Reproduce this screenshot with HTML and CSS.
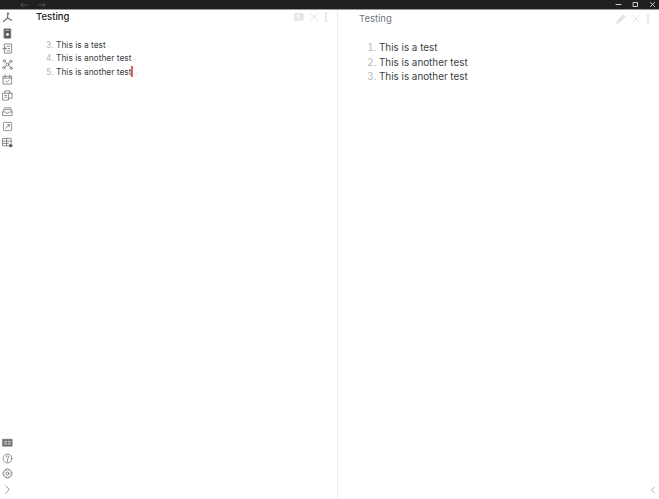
FILE: index.html
```html
<!DOCTYPE html>
<html lang="en">
<head>
    <meta charset="UTF-8">
    <meta name="viewport" content="width=device-width, initial-scale=1.0">
    <title>Testing</title>
    <link rel="stylesheet" href="styles.css">
</head>
<body>
    <header class="titlebar">
        <div class="nav-arrows">
            <svg class="arrow" viewBox="0 0 8 6"><path d="M7.500 3H1M3 1L1 3l2 2"/></svg>
            <svg class="arrow" viewBox="0 0 8 6"><path d="M.5 3H7M5 1l2 2-2 2"/></svg>
        </div>
        <div class="window-controls">
            <svg class="win-icon" viewBox="0 0 7 7"><path d="M1 3.500h5"/></svg>
            <svg class="win-icon" viewBox="0 0 7 7"><path d="M1.500 1.500h4v4h-4z"/></svg>
            <svg class="win-icon" viewBox="0 0 7 7"><path d="M1.500 1.500l4 4M5.500 1.500l-4 4"/></svg>
        </div>
    </header>

    <div class="workspace">
        <aside class="ribbon">
            <div class="ribbon-group">
                <svg class="rib-icon" viewBox="0 0 12 12"><path d="M6.500 1.500L6 6.500 1.500 10.500M6 6.500l4.500 2.500" stroke-width="1.300"/><circle cx="6.500" cy="1.500" r=".8"/></svg>
                <svg class="rib-icon solid" viewBox="0 0 12 12"><path d="M2.500 1h7v10h-7z"/><circle cx="6" cy="7" r="1.600" fill="#fff" stroke="none"/><path d="M4.500 2.500h3" stroke="#fff"/></svg>
                <svg class="rib-icon" viewBox="0 0 12 12"><path d="M3 1h7.500v10H3zM5.500 3.500h3M6.500 6h2M5.500 8.500h3M1 6h3.500M3 4.500L4.500 6 3 7.500"/></svg>
                <svg class="rib-icon" viewBox="0 0 12 12"><circle cx="6" cy="6" r="1.500"/><circle cx="2.500" cy="2" r="1.300"/><circle cx="9.500" cy="2.500" r="1.300"/><circle cx="2" cy="9.500" r="1.300"/><circle cx="10" cy="10" r="1.300"/><path d="M3 3l2 2M9 3.500L7 5M3 9l2-2M9 9L7 7"/></svg>
                <svg class="rib-icon" viewBox="0 0 12 12"><path d="M1.500 2.500h9v8.500h-9zM1.500 4.500h9M3.500 1v2.500M8.500 1v2.500M4 7.500l1.500 1.500L8 6.500"/></svg>
                <svg class="rib-icon" viewBox="0 0 12 12"><path d="M1 3.500h6v7.500H1zM3 3.500V1h5l3 3v5H7M8 1v3h3M3 6h2M3 8h2"/></svg>
                <svg class="rib-icon" viewBox="0 0 12 12"><path d="M1 6.500L2.500 2h7L11 6.500V10.500H1zM1 6.500h3l1 1.500h2l1-1.500h3M3 4h6"/></svg>
                <svg class="rib-icon" viewBox="0 0 12 12"><path d="M1.500 2.500q0-1 1-1h7q1 0 1 1v7q0 1-1 1h-7q-1 0-1-1zM4 8l4-4M6 4h2v2"/></svg>
                <svg class="rib-icon" viewBox="0 0 12 12"><path d="M1 1.500h9v8H1zM1 4.500h9M1 7h6M5 1.500v8"/><circle cx="9.500" cy="9.500" r="1.500" fill="#555"/></svg>
            </div>
            <div class="ribbon-group bottom">
                <svg class="rib-icon" viewBox="0 0 12 12"><path d="M1 2.500h10v7.500H1z" fill="#777"/><path d="M3 5h2M3 7.500h2M7 5h2M7 7.500h2" stroke="#fff"/></svg>
                <svg class="rib-icon" viewBox="0 0 12 12"><circle cx="6" cy="6" r="4.800"/><path d="M4.500 4.700q0-1.500 1.500-1.500t1.500 1.400q0 1-1.500 1.800V7.500M6 8.500v1"/></svg>
                <svg class="rib-icon" viewBox="0 0 12 12"><circle cx="6" cy="6" r="1.700"/><path d="M5 1h2l.4 1.500 1.400-.6 1.400 1.400-.7 1.300 1.500.4v2l-1.500.4.700 1.300-1.400 1.400-1.400-.6L7 11H5l-.4-1.500-1.400.6-1.400-1.400.7-1.300L1 7V5l1.500-.4-.7-1.300 1.400-1.400 1.400.6z"/></svg>
                <svg class="rib-icon" viewBox="0 0 12 12"><path d="M4 2l4 4-4 4"/></svg>
            </div>
        </aside>

        <main class="pane pane-edit">
            <div class="pane-head">
                <h1 class="note-title">Testing</h1>
                <div class="pane-actions">
                    <svg class="act-icon" viewBox="0 0 10 10"><path d="M1 1.500h8v7H1z" fill="#e4e4e4"/><path d="M5 1.500v7M2 3.500h2M2 5.500h2" stroke="#fff"/></svg>
                    <svg class="act-icon" viewBox="0 0 10 10"><path d="M1.500 1.500l7 7M8.500 1.500l-7 7"/></svg>
                    <svg class="act-icon" viewBox="0 0 10 10"><path d="M5 .8v1.400M5 4.300v1.400M5 7.800v1.400" stroke-width="1.700"/></svg>
                </div>
            </div>
            <ol class="edit-list" start="3">
                <li>This is a test<span class="eol">¬</span></li>
                <li>This is another test<span class="eol">¬</span></li>
                <li>This is another test<span class="caret"></span><span class="eol">¬</span></li>
            </ol>
        </main>

        <section class="pane pane-read">
            <div class="pane-head">
                <h2 class="note-title muted">Testing</h2>
                <div class="pane-actions">
                    <svg class="act-icon" viewBox="0 0 10 10"><path d="M.8 9.200l1-3L7.500.8l1.700 1.700-5.400 5.700z" fill="#e4e4e4"/></svg>
                    <svg class="act-icon" viewBox="0 0 10 10"><path d="M1.500 1.500l7 7M8.500 1.500l-7 7"/></svg>
                    <svg class="act-icon" viewBox="0 0 10 10"><path d="M5 .8v1.400M5 4.300v1.400M5 7.800v1.400" stroke-width="1.700"/></svg>
                </div>
            </div>
            <ol class="read-list">
                <li>This is a test</li>
                <li>This is another test</li>
                <li>This is another test</li>
            </ol>
            <svg class="collapse" viewBox="0 0 6 8"><path d="M4.500 1L1.500 4l3 3"/></svg>
        </section>
    </div>
</body>
</html>
```

FILE: styles.css
```css
* {
    box-sizing: border-box;
}

html, body {
    height: 100%;
}

body {
    margin: 0;
    display: flex;
    flex-direction: column;
    font-family: 'Inter', sans-serif;
    background: #fff;
    color: #3a3f44;
    overflow: hidden;
}

svg {
    display: block;
    fill: none;
    stroke-linecap: round;
    stroke-linejoin: round;
}

/* Title bar */
.titlebar {
    height: 10px;
    flex: none;
    display: flex;
    justify-content: space-between;
    align-items: center;
    background: #202020;
    border-bottom: 1px solid #9a9a9a;
}

.nav-arrows {
    display: flex;
    gap: 10px;
    padding-left: 20px;
}

.arrow {
    width: 8px;
    height: 6px;
    stroke: #5a5a5a;
    stroke-width: 0.8;
}

.window-controls {
    display: flex;
    gap: 10px;
    padding-right: 3px;
}

.win-icon {
    width: 7px;
    height: 7px;
    stroke: #d0d0d0;
    stroke-width: 1;
}

/* Left icon strip */
.workspace {
    flex: 1;
    display: flex;
    min-height: 0;
}

.ribbon {
    width: 14px;
    flex: none;
    display: flex;
    flex-direction: column;
    justify-content: space-between;
    padding: 2px 0 4px;
}

.ribbon-group {
    display: flex;
    flex-direction: column;
    align-items: center;
    gap: 4.600px;
}

.ribbon-group.bottom {
    gap: 4.700px;
}

.rib-icon {
    width: 11px;
    height: 11px;
    stroke: #6a6a6a;
    stroke-width: 0.8;
}

.rib-icon.solid {
    fill: #555;
}

/* Panes */
.pane {
    position: relative;
    min-width: 0;
}

.pane-edit {
    width: 324px;
    flex: none;
    border-right: 1px solid #ececec;
    padding-left: 22px;
}

.pane-read {
    flex: 1;
    padding-left: 21px;
}

.pane-head {
    display: flex;
    justify-content: space-between;
    align-items: center;
    height: 12px;
    padding-right: 6px;
}

.note-title {
    margin: 0;
    font-size: 9.500px;
    font-weight: 500;
    color: #222;
}

.note-title.muted {
    margin-top: 4px;
    font-weight: 400;
    color: #6f7780;
}

.pane-actions {
    display: flex;
    gap: 2px;
    margin-top: 1px;
}

.act-icon:first-child {
    margin-right: 3px;
}

.pane-read .pane-actions {
    margin-top: 5px;
}

.act-icon {
    width: 10px;
    height: 10px;
    stroke: #e0e0e0;
    stroke-width: 0.8;
}

ol {
    margin: 0;
    padding: 0;
}

li::marker {
    color: #b4b8bd;
}

.edit-list {
    margin-top: 17px;
    padding-left: 20px;
    font-size: 8.400px;
    line-height: 12.400px;
}

.read-list {
    margin-top: 18px;
    padding-left: 20px;
    font-size: 9.850px;
    line-height: 14.500px;
}

.eol {
    color: #cfcfcf;
    font-size: 6px;
    margin-left: 1px;
}

.caret {
    display: inline-block;
    width: 1.500px;
    height: 11px;
    vertical-align: -2px;
    background: #e0605a;
}

.collapse {
    position: absolute;
    right: 3px;
    bottom: 5px;
    width: 6px;
    height: 8px;
    stroke: #b0b0b0;
    stroke-width: 1;
}
```
